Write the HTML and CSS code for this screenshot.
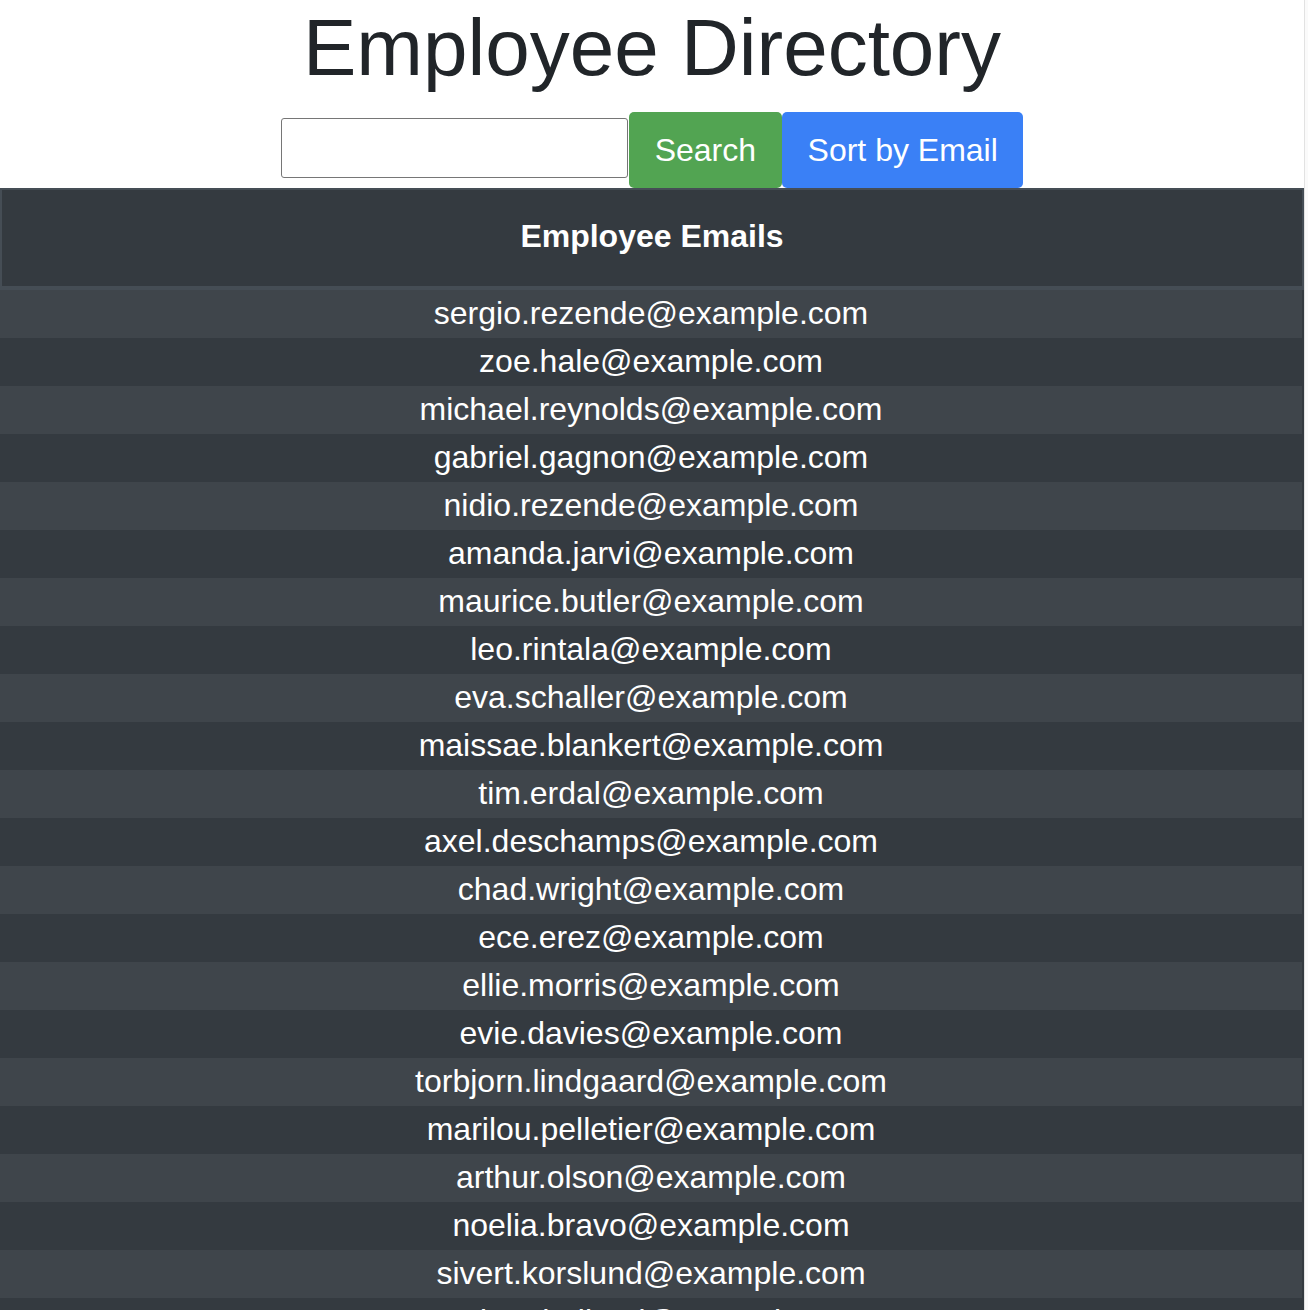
FILE: index.html
```html
<!DOCTYPE html>
<html lang="en">
<head>
<meta charset="utf-8">
<title>Employee Directory</title>
<link rel="stylesheet" href="styles.css">
</head>
<body>
<div class="page">
  <h1 class="title">Employee Directory</h1>
  <div class="controls">
    <input class="search-input" type="text" aria-label="Search">
    <button class="btn btn-search" type="button">Search</button>
    <button class="btn btn-sort" type="button">Sort by Email</button>
  </div>
  <table class="emails">
    <thead>
      <tr><th>Employee Emails</th></tr>
    </thead>
    <tbody>
      <tr><td>sergio.rezende@example.com</td></tr>
      <tr><td>zoe.hale@example.com</td></tr>
      <tr><td>michael.reynolds@example.com</td></tr>
      <tr><td>gabriel.gagnon@example.com</td></tr>
      <tr><td>nidio.rezende@example.com</td></tr>
      <tr><td>amanda.jarvi@example.com</td></tr>
      <tr><td>maurice.butler@example.com</td></tr>
      <tr><td>leo.rintala@example.com</td></tr>
      <tr><td>eva.schaller@example.com</td></tr>
      <tr><td>maissae.blankert@example.com</td></tr>
      <tr><td>tim.erdal@example.com</td></tr>
      <tr><td>axel.deschamps@example.com</td></tr>
      <tr><td>chad.wright@example.com</td></tr>
      <tr><td>ece.erez@example.com</td></tr>
      <tr><td>ellie.morris@example.com</td></tr>
      <tr><td>evie.davies@example.com</td></tr>
      <tr><td>torbjorn.lindgaard@example.com</td></tr>
      <tr><td>marilou.pelletier@example.com</td></tr>
      <tr><td>arthur.olson@example.com</td></tr>
      <tr><td>noelia.bravo@example.com</td></tr>
      <tr><td>sivert.korslund@example.com</td></tr>
      <tr><td>andrea.holland@example.com</td></tr>
      <tr><td>lucas.martin@example.com</td></tr>
    </tbody>
  </table>
</div>
</body>
</html>
```
FILE: styles.css
```css
html {
  background: #fafafa;
}
body {
  margin: 0;
  width: 1304px;
  background: #ffffff;
  border-right: 1px solid #e2e2e2;
  font-family: "Liberation Sans", Arial, Helvetica, sans-serif;
  color: #212529;
}
.page {
  display: flex;
  flex-direction: column;
  align-items: center;
}
.title {
  margin: 0;
  font-size: 80px;
  line-height: 96px;
  font-weight: 400;
  color: #212529;
  text-align: center;
}
.controls {
  margin-top: 16px;
  display: flex;
  align-items: flex-start;
  justify-content: center;
}
.search-input {
  margin-top: 6px;
  width: 347px;
  height: 60px;
  box-sizing: border-box;
  border: 1px solid #767676;
  border-radius: 3px;
  padding: 0 8px;
  font-family: inherit;
  font-size: 24px;
  background: #fff;
}
.btn {
  height: 76px;
  border: 0;
  border-radius: 5px;
  color: #ffffff;
  font-family: "Liberation Sans", Arial, Helvetica, sans-serif;
  font-size: 32px;
  line-height: 74px;
  padding-bottom: 2px;
  cursor: pointer;
}
.btn-search {
  margin-left: 1px;
  padding-left: 26px;
  padding-right: 26px;
  background: #52a452;
}
.btn-sort {
  padding-left: 25.5px;
  padding-right: 25.5px;
  background: #3a80f6;
}
.emails {
  width: 1304px;
  border-collapse: separate;
  border-spacing: 0;
  background: #343a40;
  color: #ffffff;
  font-size: 32px;
}
.emails th {
  padding: 22px 24px 26px;
  line-height: 48px;
  font-weight: 700;
  text-align: center;
  border-top: 2px solid #454d55;
  border-left: 2px solid #454d55;
  border-right: 2px solid #454d55;
  border-bottom: 4px solid #454d55;
}
.emails td {
  padding: 0 0 2px;
  line-height: 46px;
  text-align: center;
  border-right: 2px solid #343a40;
}
.emails tbody tr:nth-child(odd) td {
  background: #3f454b;
}
```
